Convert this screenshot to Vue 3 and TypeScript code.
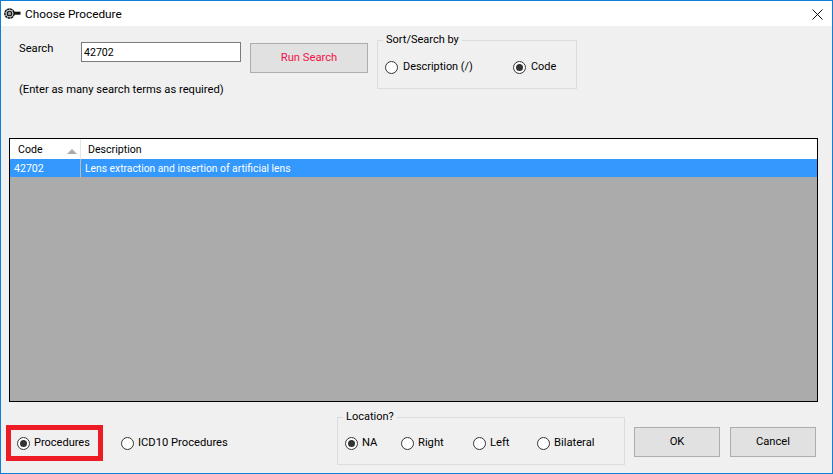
<script setup lang="ts">
import { ref } from 'vue'

const query = ref('42702')
const sortBy = ref('code')
const kind = ref('procedures')
const location = ref('na')
const sortOptions = [
  { value: 'description', label: 'Description (/)' },
  { value: 'code', label: 'Code' },
]
const locations = [
  { value: 'na', label: 'NA' },
  { value: 'right', label: 'Right' },
  { value: 'left', label: 'Left' },
  { value: 'bilateral', label: 'Bilateral' },
]
</script>

<template>
  <div class="window">
    <header class="titlebar">
      <svg class="app-icon" width="17" height="13" viewBox="0 0 17 13" aria-hidden="true">
        <circle cx="5.5" cy="6.5" r="4.6" fill="#ddd" stroke="#111" stroke-width="1.5" stroke-dasharray="2.6 .5" />
        <circle cx="5.5" cy="6.5" r="2.3" fill="#999" stroke="#111" stroke-width="1.1" />
        <rect x="10" y="4.7" width="6.5" height="3" fill="#111" />
      </svg>
      <span class="title">Choose Procedure</span>
      <svg class="close" width="11" height="11" viewBox="0 0 11 11" aria-hidden="true">
        <path d="M.5.5l10 10M10.5.5l-10 10" stroke="#111" stroke-width="1" fill="none" />
      </svg>
    </header>

    <section class="search">
      <label class="search-label" for="q">Search</label>
      <input id="q" v-model="query" class="search-input" type="text" />
      <button class="btn run" type="button">Run Search</button>
      <fieldset class="group sort">
        <legend>Sort/Search by</legend>
        <div class="sort-options">
          <label v-for="o in sortOptions" :key="o.value" class="radio">
            <input v-model="sortBy" type="radio" name="sort" :value="o.value" />
            <span>{{ o.label }}</span>
          </label>
        </div>
      </fieldset>
      <p class="hint">(Enter as many search terms as required)</p>
    </section>

    <section class="list">
      <div class="list-head">
        <div class="col-code">
          <span>Code</span>
          <svg width="10" height="5" viewBox="0 0 10 5" aria-hidden="true"><path d="M5 0l5 5H0z" fill="#aaa" /></svg>
        </div>
        <div class="col-desc">Description</div>
      </div>
      <div class="list-row">
        <div class="cell-code">42702</div>
        <div class="cell-desc">Lens extraction and insertion of artificial lens</div>
      </div>
    </section>

    <footer class="bottom">
      <div class="highlight">
        <label class="radio">
          <input v-model="kind" type="radio" name="kind" value="procedures" />
          <span>Procedures</span>
        </label>
      </div>
      <label class="radio icd">
        <input v-model="kind" type="radio" name="kind" value="icd10" />
        <span>ICD10 Procedures</span>
      </label>
      <fieldset class="group loc">
        <legend>Location?</legend>
        <div class="loc-options">
          <label v-for="o in locations" :key="o.value" class="radio">
            <input v-model="location" type="radio" name="loc" :value="o.value" />
            <span>{{ o.label }}</span>
          </label>
        </div>
      </fieldset>
      <button class="btn action ok" type="button">OK</button>
      <button class="btn action cancel" type="button">Cancel</button>
    </footer>
  </div>
</template>

<style scoped>
.window {
  width: 833px;
  height: 474px;
  box-sizing: border-box;
  border: 1px solid #0d7fd8;
  background: #f0f0f0;
  font-family: Roboto, "Liberation Sans", sans-serif;
  font-size: 11.2px;
  line-height: 14px;
  color: #000;
  overflow: hidden;
  display: flex;
  flex-direction: column;
}
.titlebar {
  height: 25px;
  flex: none;
  background: #fff;
  display: flex;
  align-items: center;
  padding: 0 9px 0 3px;
}
.app-icon { flex: none; }
.title { margin-left: 4px; flex: 1; font-size: 11.8px; }
.close { flex: none; margin-top: 1px; }

.search {
  height: 112px;
  flex: none;
  box-sizing: border-box;
  padding: 7px 0 0 18px;
  display: grid;
  grid-template-columns: 62px 160px 9px 118px 9px 200px;
  grid-template-rows: 42px 14px;
  row-gap: 8px;
  align-items: start;
}
.search-label { grid-column: 1; grid-row: 1; margin-top: 9px; }
.search-input {
  grid-column: 2;
  grid-row: 1;
  margin-top: 9px;
  height: 20px;
  box-sizing: border-box;
  width: 160px;
  border: 1px solid #7a7a7a;
  background: #fff;
  padding: 1px 2px;
  font: inherit;
  font-size: 10.6px;
  outline: none;
}
.run {
  grid-column: 4;
  grid-row: 1;
  margin-top: 10px;
  height: 30px;
  color: #f5134a;
  font-size: 11.6px;
}
.sort { grid-column: 6; grid-row: 1 / span 2; height: 56px; }
.hint { grid-column: 1 / span 4; grid-row: 2; margin: 0; }

.btn {
  box-sizing: border-box;
  border: 1px solid #adadad;
  background: #e1e1e1;
  font: inherit;
  padding: 0;
}

.group {
  margin: 0;
  padding: 0;
  min-width: 0;
  box-sizing: border-box;
  border: 1px solid #dcdcdc;
}
.group legend {
  margin-left: 5px;
  padding: 0 3px;
  line-height: 14px;
  font-size: 11px;
}
.sort-options {
  display: grid;
  grid-template-columns: 128px auto;
  padding: 13px 0 0 7px;
  font-size: 10.9px;
}
.sort-options .radio { gap: 5px; }
.loc-options {
  display: grid;
  grid-template-columns: 56px 72px 64px auto;
  padding: 12px 0 0 7px;
}

.radio {
  display: flex;
  align-items: center;
  gap: 4px;
  height: 14px;
  white-space: nowrap;
}
.radio input {
  appearance: none;
  margin: 0;
  flex: none;
  width: 13px;
  height: 13px;
  box-sizing: border-box;
  border: 1px solid #333;
  border-radius: 50%;
  background: #fff;
  display: grid;
  place-items: center;
}
.radio input:checked::after {
  content: "";
  width: 7px;
  height: 7px;
  border-radius: 50%;
  background: #333;
}

.list {
  width: 809px;
  height: 264px;
  flex: none;
  box-sizing: border-box;
  margin-left: 8px;
  border: 1px solid #000;
  background: #ababab;
}
.list-head {
  height: 20px;
  background: #fff;
  display: flex;
  font-size: 10.6px;
}
.col-code {
  width: 71px;
  flex: none;
  box-sizing: border-box;
  border-right: 1px solid #e5e5e5;
  padding: 4px 0 0 8px;
  display: flex;
  justify-content: space-between;
}
.col-code svg { margin: 6px 3px 0 0; }
.col-desc { padding: 4px 0 0 7px; }
.list-row {
  height: 18px;
  background: #3399ff;
  color: #fff;
  display: flex;
  align-items: center;
  font-size: 10.3px;
}
.cell-code {
  width: 71px;
  height: 100%;
  flex: none;
  box-sizing: border-box;
  border-right: 1px solid #c9b9a0;
  padding: 3px 0 0 4px;
  font-size: 10.6px;
}
.cell-desc { padding: 2px 0 0 4px; }

.bottom {
  flex: 1;
  display: flex;
  align-items: flex-start;
  padding-left: 5px;
}
.highlight {
  margin-top: 23px;
  width: 97px;
  height: 36px;
  flex: none;
  box-sizing: border-box;
  border: 5px solid #ed1c24;
  padding: 6px 0 0 6px;
  font-size: 11px;
}
.icd { margin: 34px 0 0 18px; width: 216px; flex: none; }
.loc {
  margin-top: 8px;
  width: 288px;
  height: 55px;
  flex: none;
}
.action {
  margin-top: 25px;
  width: 86px;
  height: 30px;
  flex: none;
}
.ok { margin-left: 9px; }
.cancel { margin-left: 10px; }
</style>
